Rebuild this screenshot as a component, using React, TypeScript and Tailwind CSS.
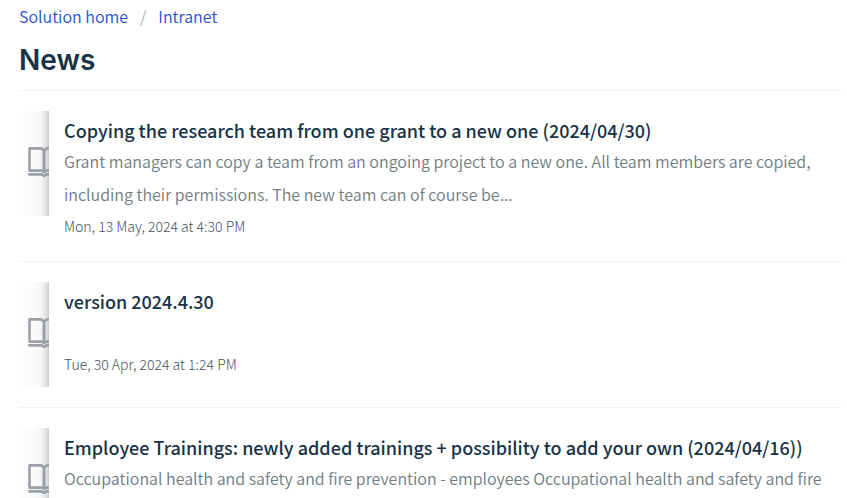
import React from 'react';

type Article = {
  id: number;
  title: string;
  description: string;
  date?: string;
};

const articles: Article[] = [
  {
    id: 1,
    title: 'Copying the research team from one grant to a new one (2024/04/30)',
    description:
      'Grant managers can copy a team from an ongoing project to a new one. All team members are copied, including their permissions. The new team can of course be...',
    date: 'Mon, 13 May, 2024 at 4:30 PM',
  },
  {
    id: 2,
    title: 'version 2024.4.30',
    description: '',
    date: 'Tue, 30 Apr, 2024 at 1:24 PM',
  },
  {
    id: 3,
    title:
      'Employee Trainings: newly added trainings + possibility to add your own (2024/04/16))',
    description:
      'Occupational health and safety and fire prevention - employees Occupational health and safety and fire',
  },
];

function BookIcon() {
  return (
    <svg
      width="34"
      height="33"
      viewBox="0 2 34 33"
      fill="none"
      stroke="#9aa0a6"
      strokeWidth="2.6"
      strokeLinejoin="round"
      className="shrink-0"
      aria-hidden="true"
    >
      <path d="M17 5.6 L14.5 3.4 H2.5 V25.6 H15 L17 27 L19 25.6 H31.5 V3.4 H19.5 Z" />
      <path d="M17 5 V27" strokeWidth="3" />
      <path d="M1.3 29.4 H14.8 L17 31 L19.2 29.4 H32.7" />
    </svg>
  );
}

function Thumbnail() {
  return (
    <div className="flex h-[105px] w-[30px] shrink-0 items-center overflow-hidden bg-[linear-gradient(to_right,#fefefe,#fbfbfb_55%,#f4f4f4_75%,#e6e6e6_88%,#cdcdcd)] pl-2">
      <BookIcon />
    </div>
  );
}

function ArticleRow({ article }: { article: Article }) {
  return (
    <li className="flex gap-[15px] border-t border-[#f1f2f3] py-5">
      <Thumbnail />
      <div className="min-w-0 flex-1 pt-1">
        <h2 className="text-lg leading-[30px] font-medium text-[#183247]">
          <a href="#">{article.title}</a>
        </h2>
        <p className="min-h-[33px] text-base leading-[33px] font-[350] text-[#6f7c82]">
          {article.description}
        </p>
        {article.date && (
          <p className="text-sm leading-[30px] font-light text-[#44535f]">{article.date}</p>
        )}
      </div>
    </li>
  );
}

export default function App() {
  return (
    <main className="h-screen overflow-hidden bg-white pr-[5px] pl-[19px] font-['Noto_Sans_CJK_SC',sans-serif]">
      <nav
        aria-label="Breadcrumb"
        className="flex pt-1 text-base leading-6 font-[350] text-[#1f4fd0]"
      >
        <a href="#">Solution home</a>
        <span className="px-3 text-[#a4a9ae]">/</span>
        <a href="#">Intranet</a>
      </nav>
      <h1 className="pt-3 pb-[10px] font-['Inter',sans-serif] text-[28px] leading-10 font-semibold text-[#183247]">
        News
      </h1>
      <ul>
        {articles.map((article) => (
          <ArticleRow key={article.id} article={article} />
        ))}
      </ul>
    </main>
  );
}
